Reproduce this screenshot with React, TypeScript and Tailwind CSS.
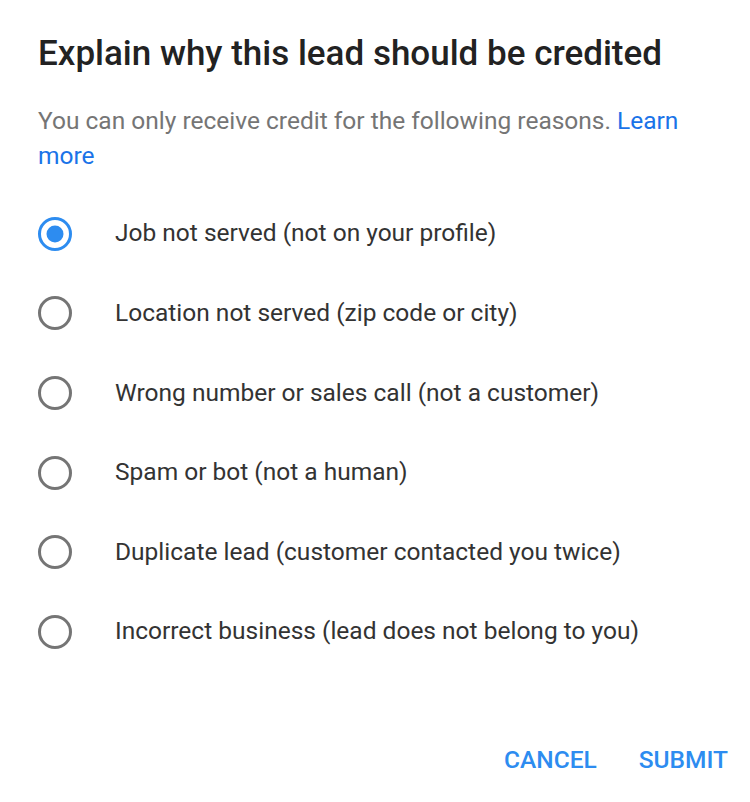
import React, { useState } from "react";

const reasons = [
  "Job not served (not on your profile)",
  "Location not served (zip code or city)",
  "Wrong number or sales call (not a customer)",
  "Spam or bot (not a human)",
  "Duplicate lead (customer contacted you twice)",
  "Incorrect business (lead does not belong to you)",
];

const Radio = ({ checked }: { checked: boolean }) => (
  <svg width="36" height="36" viewBox="0 0 36 36" className="shrink-0">
    <circle cx="18" cy="18" r="15.5" fill="none" stroke={checked ? "#2d8cf0" : "#757575"} strokeWidth="3" />
    {checked && <circle cx="18" cy="18" r="8.5" fill="#2d8cf0" />}
  </svg>
);

export default function App() {
  const [selected, setSelected] = useState(0);

  return (
    <div className="w-[750px] h-[802px] bg-white font-['Roboto',sans-serif] pl-[38px] pr-[22px] pt-[33px] flex flex-col">
      <h1 className="text-[35px] leading-[42px] font-medium text-[#222222]">
        Explain why this lead should be credited
      </h1>
      <p className="mt-[28px] text-[24.5px] leading-[35px] text-[#757575] pr-[20px]">
        You can only receive credit for the following reasons.{" "}
        <a className="text-[#1a73e8]">Learn more</a>
      </p>
      <div className="mt-[21px] flex flex-col">
        {reasons.map((r, i) => (
          <label
            key={r}
            onClick={() => setSelected(i)}
            className="flex items-center h-[79.6px] -ml-[1px] cursor-pointer"
          >
            <Radio checked={selected === i} />
            <span className="ml-[42px] text-[24.5px] text-[#333333]">{r}</span>
          </label>
        ))}
      </div>
      <div className="mt-auto mb-[23px] flex justify-end gap-[42px] text-[24.5px] font-medium text-[#2d8cf0]">
        <button>CANCEL</button>
        <button>SUBMIT</button>
      </div>
    </div>
  );
}
